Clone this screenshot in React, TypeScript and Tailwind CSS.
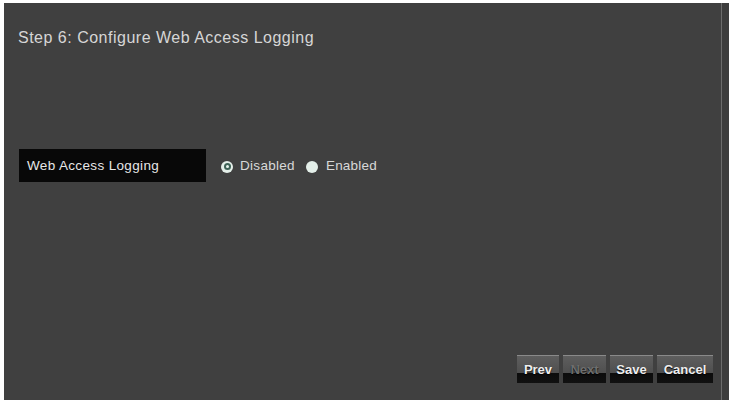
import React from "react"

function Radio({ checked }: { checked: boolean }) {
  return (
    <span className="flex h-[12px] w-[12px] items-center justify-center rounded-full bg-[#e4efe9]">
      {checked ? (
        <span className="flex h-[7px] w-[7px] items-center justify-center rounded-full bg-[#3f6357]">
          <span className="h-[3px] w-[3px] rounded-full bg-[#e8f4ee]" />
        </span>
      ) : null}
    </span>
  )
}

function WizardButton({ label, disabled, width }: { label: string; disabled?: boolean; width: string }) {
  return (
    <button
      type="button"
      disabled={disabled}
      className={`relative flex h-[28px] ${width} items-center justify-center border-t border-[#8a8a8a] bg-[linear-gradient(to_bottom,#5e5e5e_0%,#4f4f4f_62%,#0c0c0c_64%,#111111_100%)] text-[13px] font-bold ${
        disabled ? "text-[#6e6e6e]" : "text-[#eeeeee]"
      } [text-shadow:0_1px_1px_#000]`}
    >
      {label}
    </button>
  )
}

export default function App() {
  return (
    <div className="flex h-[400px] w-[729px] bg-white pl-[4px] pt-[3px] font-['Liberation_Sans',Arial,sans-serif]">
      <div className="flex flex-1 flex-col bg-[#404040] pl-[15px]">
        <h1 className="mt-[25px] text-[16px] leading-[20px] tracking-[0.5px] text-[#d6d6d6] -ml-px">
          Step 6: Configure Web Access Logging
        </h1>

        <div className="mt-[101px] flex items-center">
          <div className="flex h-[33px] w-[187px] items-center bg-[#080808] pl-[8px] pt-[2px] text-[13.5px] tracking-[0.35px] text-[#e6e6e6]">
            Web Access Logging
          </div>
          <label className="ml-[15px] flex items-center gap-[7px] pt-[2px] text-[13.5px] tracking-[0.3px] text-[#d8d8d8]">
            <Radio checked />
            Disabled
          </label>
          <label className="ml-[11px] flex items-center gap-[8px] pt-[2px] text-[13.5px] tracking-[0.2px] text-[#d8d8d8]">
            <Radio checked={false} />
            Enabled
          </label>
        </div>

        <div className="mt-auto mb-[17px] flex justify-end gap-[4px] pr-[8px]">
          <WizardButton label="Prev" width="w-[42px]" />
          <WizardButton label="Next" width="w-[43px]" disabled />
          <WizardButton label="Save" width="w-[43px]" />
          <WizardButton label="Cancel" width="w-[56px]" />
        </div>
      </div>
      <div className="w-px bg-[#6c6c6c]" />
      <div className="w-[7px] bg-[#3d3d3d]" />
    </div>
  )
}
